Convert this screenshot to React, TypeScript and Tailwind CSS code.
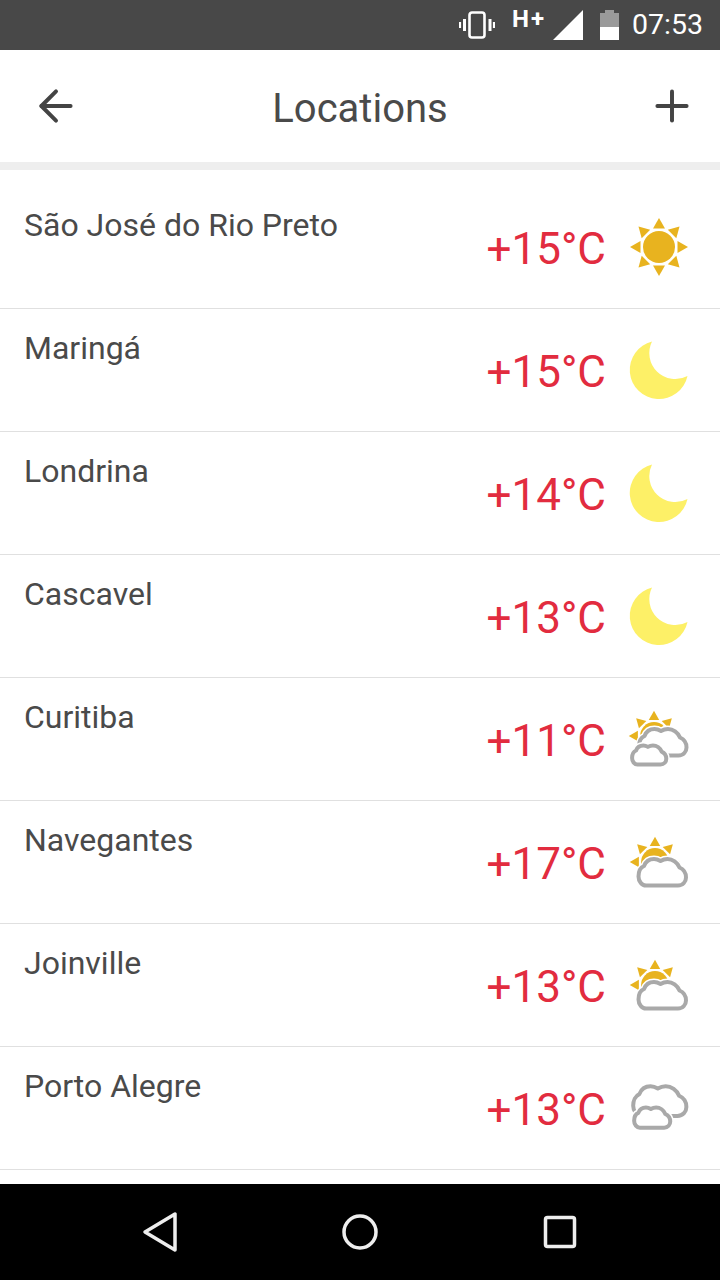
import { ArrowLeft, Plus } from "lucide-react";

type Weather = "sun" | "moon" | "partly" | "mostly" | "cloudy";

interface Location {
  name: string;
  temp: string;
  weather: Weather;
}

const locations: Location[] = [
  { name: "São José do Rio Preto", temp: "+15°C", weather: "sun" },
  { name: "Maringá", temp: "+15°C", weather: "moon" },
  { name: "Londrina", temp: "+14°C", weather: "moon" },
  { name: "Cascavel", temp: "+13°C", weather: "moon" },
  { name: "Curitiba", temp: "+11°C", weather: "mostly" },
  { name: "Navegantes", temp: "+17°C", weather: "partly" },
  { name: "Joinville", temp: "+13°C", weather: "partly" },
  { name: "Porto Alegre", temp: "+13°C", weather: "cloudy" },
];

const CLOUD_PATH =
  "M9 28.5 H41 C46 28.5 49 24.5 49 20.5 C49 15.5 46 12 42.5 10.5 C40.5 5.5 35.5 2 30.5 2 C27.5 2 25.5 2.8 23.5 4 C21.5 2.8 19.5 2 17 2 C12 2 8.5 5 7 9 C3.5 10.5 1.5 15 1.5 19.5 C1.5 24.5 5 28.5 9 28.5 Z";

// 28px radius sun, centred on 0,0
function Sun({ x, y, scale = 1 }: { x: number; y: number; scale?: number }) {
  return (
    <g transform={`translate(${x} ${y}) scale(${scale})`}>
      {[0, 45, 90, 135, 180, 225, 270, 315].map((deg) => (
        <polygon key={deg} points="0,-29 -6,-18.5 6,-18.5" fill="#e8b31f" transform={`rotate(${deg})`} />
      ))}
      <circle r="16" fill="#e8b31f" />
    </g>
  );
}

function Cloud({ x, y, scale = 1 }: { x: number; y: number; scale?: number }) {
  return (
    <g transform={`translate(${x} ${y}) scale(${scale})`}>
      <path d={CLOUD_PATH} fill="none" stroke="#fff" strokeWidth={7 / scale} />
      <path d={CLOUD_PATH} fill="#fff" stroke="#a9a9a9" strokeWidth={4 / scale} strokeLinejoin="round" />
    </g>
  );
}

function WeatherIcon({ weather }: { weather: Weather }) {
  return (
    <svg width="60" height="60" viewBox="0 0 60 60" className="shrink-0 overflow-visible">
      {weather === "sun" && <Sun x={30} y={30} />}
      {weather === "moon" && <path d="M23 1.5 A29.2 29.2 0 1 0 58.5 36 A26 26 0 0 1 23 1.5 Z" fill="#fdf067" />}
      {weather === "partly" && (
        <>
          <Sun x={26} y={30} scale={0.87} />
          <Cloud x={8} y={25} />
        </>
      )}
      {weather === "mostly" && (
        <>
          <Sun x={25} y={27} scale={0.87} />
          <Cloud x={8.5} y={18} />
          <Cloud x={2} y={35} scale={0.72} />
        </>
      )}
      {weather === "cloudy" && (
        <>
          <Cloud x={2.5} y={6} scale={1.12} />
          <Cloud x={4} y={28} scale={0.76} />
        </>
      )}
    </svg>
  );
}

function StatusBar() {
  return (
    <div className="flex h-[50px] shrink-0 items-center justify-end bg-[#484848] pr-[17px] text-white">
      <svg width="36" height="30" viewBox="0 0 36 30" className="mr-[17px]" fill="none" stroke="#fff">
        <rect x="10.5" y="2.5" width="15" height="25" rx="2.5" strokeWidth="2.6" />
        <path d="M5.5 9 V21 M31 9 V21" strokeWidth="3" />
        <path d="M1 12 V18 M35 12 V18" strokeWidth="2.2" />
      </svg>
      <span className="mb-[13px] mr-[8px] w-[33px] text-[24px] font-bold leading-none tracking-[2px]">H+</span>
      <svg width="30" height="30" viewBox="0 0 30 30" className="mr-[17px]">
        <polygon points="30,0 30,30 0,30" fill="#fff" />
      </svg>
      <svg width="19" height="30" viewBox="0 0 19 30" className="mr-[13px]">
        <path d="M0 3 H5 V0 H14 V3 H19 V17 H0 Z" fill="#9a9a9a" />
        <rect y="17" width="19" height="13" fill="#fff" />
      </svg>
      <span className="text-[28.5px] leading-none">07:53</span>
    </div>
  );
}

function Toolbar() {
  return (
    <div className="flex h-[112px] shrink-0 items-center justify-between pl-[31px] pr-[23px] text-[#444]">
      <ArrowLeft size={50} strokeWidth={1.9} className="shrink-0" />
      <h1 className="mr-[8px] mt-[6px] text-[40px] font-normal text-[#4a4a4a]">Locations</h1>
      <Plus size={50} strokeWidth={1.9} className="shrink-0" />
    </div>
  );
}

function LocationRow({ location }: { location: Location }) {
  return (
    <div className="flex h-[123px] border-b border-[#e0e0e0] pl-[24px] pr-[31px]">
      <div className="flex-1 pt-[19px] text-[32px] leading-[40px] text-[#4a4a4a]">{location.name}</div>
      <div className="mr-[23px] pt-[35px] text-[44px] leading-[56px] text-[#e22c3f]">{location.temp}</div>
      <div className="pt-[31px]">
        <WeatherIcon weather={location.weather} />
      </div>
    </div>
  );
}

function NavBar() {
  return (
    <div className="flex h-[96px] shrink-0 items-center justify-center bg-black">
      <svg width="720" height="96" viewBox="0 0 720 96" fill="none" stroke="#eee" strokeWidth="3.5" strokeLinejoin="round">
        <polygon points="145,48 175,30 175,66" />
        <circle cx="360" cy="48" r="16" />
        <rect x="545.5" y="33.5" width="29" height="29" rx="2" />
      </svg>
    </div>
  );
}

export default function App() {
  return (
    <div className="flex h-[1280px] w-[720px] flex-col overflow-hidden bg-white font-['Roboto',sans-serif]">
      <StatusBar />
      <Toolbar />
      <div className="h-[8px] shrink-0 bg-[#eeeeee]" />
      <div className="flex-1 overflow-hidden pt-[16px]">
        {locations.map((location) => (
          <LocationRow key={location.name} location={location} />
        ))}
      </div>
      <NavBar />
    </div>
  );
}
